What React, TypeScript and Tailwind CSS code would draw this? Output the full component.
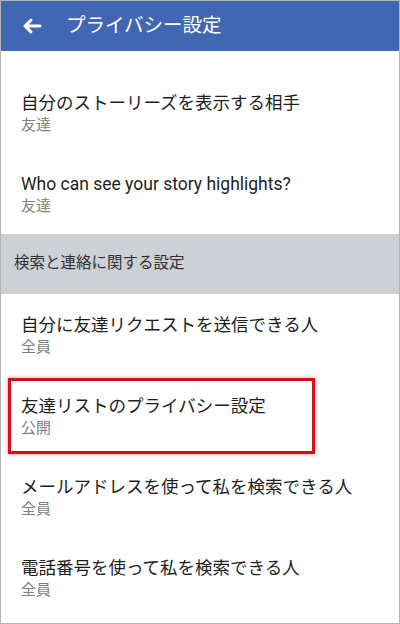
import React from 'react'

type Setting = {
  title: string
  value: string
  highlighted?: boolean
}

const storySettings: Setting[] = [
  { title: '自分のストーリーズを表示する相手', value: '友達' },
  { title: 'Who can see your story highlights?', value: '友達' }
]

const searchSettings: Setting[] = [
  { title: '自分に友達リクエストを送信できる人', value: '全員' },
  { title: '友達リストのプライバシー設定', value: '公開', highlighted: true },
  { title: 'メールアドレスを使って私を検索できる人', value: '全員' },
  { title: '電話番号を使って私を検索できる人', value: '全員' }
]

function BackArrow() {
  return (
    <svg width="20" height="16" viewBox="0 0 20 16" fill="none">
      <path
        d="M18 8H3.5M9 2.2 3 8l6 5.8"
        stroke="white"
        strokeWidth="3"
        strokeLinecap="round"
        strokeLinejoin="round"
      />
    </svg>
  )
}

function SettingRow({ title, value, highlighted }: Setting) {
  return (
    <div className="relative h-[81px] px-5 pt-[19px]">
      <p className="text-[17.5px] leading-6 text-[#1c1e21]">{title}</p>
      <p className="text-[15px] leading-5 text-[#7d7f83]">{value}</p>
      {highlighted && (
        <div className="absolute left-[7px] top-[3px] h-[76px] w-[307px] border-[3px] border-[#d3121c] shadow-[0_0_3px_1px_rgba(230,90,100,0.45)]" />
      )}
    </div>
  )
}

export default function App() {
  return (
    <div
      className="h-[624px] w-[400px] overflow-hidden border border-[#b4b4b4] bg-white"
      style={{ fontFamily: 'Roboto, "Noto Sans CJK JP", sans-serif' }}
    >
      {/* App bar */}
      <header className="flex h-[50px] items-center bg-[#4267b2] pl-[21px]">
        <BackArrow />
        <h1 className="ml-[24px] text-[19.5px] text-white">プライバシー設定</h1>
      </header>

      <div className="pt-[21px]">
        {storySettings.map((s) => (
          <SettingRow key={s.title} {...s} />
        ))}
      </div>

      {/* Section heading */}
      <div className="flex h-[60px] items-center bg-[#cdd0d5] px-[13px]">
        <span className="text-[15.5px] text-[#2f3033]">検索と連絡に関する設定</span>
      </div>

      <div>
        {searchSettings.map((s) => (
          <SettingRow key={s.title} {...s} />
        ))}
      </div>
    </div>
  )
}
